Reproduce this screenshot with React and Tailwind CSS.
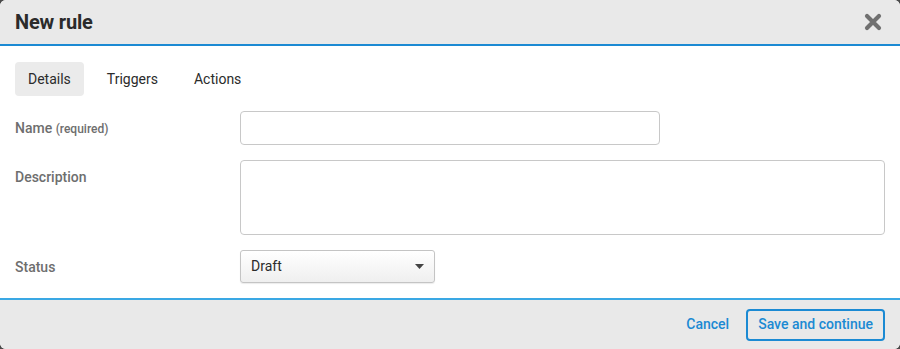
import React, { useState } from 'react';

function App() {
  const [tab, setTab] = useState('Details');
  const tabs = ['Details', 'Triggers', 'Actions'];

  return (
    <div className="w-[900px] h-[349px] bg-[#4a4a4a] font-['Roboto',sans-serif]">
      <div className="w-full h-full rounded-[6px] overflow-hidden bg-white flex flex-col">
        {/* header */}
        <div className="h-[46px] shrink-0 bg-[#e9e9e9] border-b-2 border-[#1b8ad3] flex items-center justify-between pl-[15px] pr-[18px]">
          <h1 className="text-[20px] font-bold text-[#2b2b2b] leading-none tracking-[-0.2px]">New rule</h1>
          <button className="text-[#707070]">
            <svg width="18" height="18" viewBox="0 0 18 18">
              <path d="M3 3 L15 15 M15 3 L3 15" stroke="currentColor" strokeWidth="4.2" strokeLinecap="round" />
            </svg>
          </button>
        </div>

        {/* body */}
        <div className="flex-1 px-[15px] pt-[16px]">
          <div className="flex gap-[10px] text-[14px] text-[#2b2b2b]">
            {tabs.map((t) => (
              <button
                key={t}
                onClick={() => setTab(t)}
                className={`h-[34px] px-[13px] rounded-[4px] ${t === tab ? 'bg-[#ebebeb]' : ''}`}
              >
                {t}
              </button>
            ))}
          </div>

          <div className="mt-[15px] flex items-center">
            <label className="w-[225px] text-[14px] font-medium text-[#6e6e6e]">
              Name <span className="text-[12px]">(required)</span>
            </label>
            <input className="w-[420px] h-[34px] border border-[#c8c8c8] rounded-[4px] outline-none px-2" />
          </div>

          <div className="mt-[15px] flex items-start">
            <label className="w-[225px] pt-[7px] text-[14px] font-medium text-[#6e6e6e]">Description</label>
            <textarea className="w-[645px] h-[75px] border border-[#c8c8c8] rounded-[4px] outline-none px-2 resize-none" />
          </div>

          <div className="mt-[15px] flex items-center">
            <label className="w-[225px] pt-[1px] text-[14px] font-medium text-[#6e6e6e]">Status</label>
            <div className="w-[195px] h-[33px] border border-[#c4c4c4] rounded-[3px] bg-gradient-to-b from-white to-[#efefef] shadow-[0_1px_1px_rgba(0,0,0,0.08)] flex items-center justify-between pl-[10px] pr-[10px] text-[14px] text-[#2b2b2b]">
              <span>Draft</span>
              <svg width="9" height="5" viewBox="0 0 9 5">
                <path d="M0 0 H9 L4.5 5 Z" fill="#444" />
              </svg>
            </div>
          </div>
        </div>

        {/* footer */}
        <div className="h-[51px] shrink-0 bg-[#e9e9e9] border-t-2 border-[#3aa8e4] flex items-center justify-end gap-[17px] pr-[15px]">
          <button className="text-[14px] font-medium text-[#1b8ad3]">Cancel</button>
          <button className="h-[32px] px-[10px] border-2 border-[#1b8ad3] rounded-[4px] text-[14px] font-medium text-[#1b8ad3]">
            Save and continue
          </button>
        </div>
      </div>
    </div>
  );
}

export default App;
